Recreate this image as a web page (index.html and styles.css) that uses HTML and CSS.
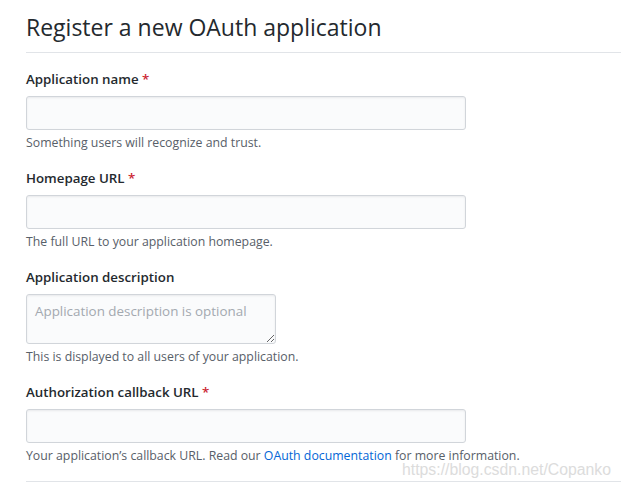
FILE: index.html
```html
<!DOCTYPE html>
<html lang="en">
<head>
    <meta charset="UTF-8">
    <meta name="viewport" content="width=device-width, initial-scale=1.0">
    <title>Register a new OAuth application</title>
    <link rel="stylesheet" href="styles.css">
</head>
<body>
    <div class="page">
        <h2 class="subhead">Register a new OAuth application</h2>

        <form class="app-form">
            <dl class="form-group">
                <dt><label for="app-name">Application name <span class="required">*</span></label></dt>
                <dd>
                    <input type="text" id="app-name" class="form-control">
                    <p class="note">Something users will recognize and trust.</p>
                </dd>
            </dl>

            <dl class="form-group">
                <dt><label for="app-url">Homepage URL <span class="required">*</span></label></dt>
                <dd>
                    <input type="text" id="app-url" class="form-control">
                    <p class="note">The full URL to your application homepage.</p>
                </dd>
            </dl>

            <dl class="form-group">
                <dt><label for="app-desc">Application description</label></dt>
                <dd>
                    <textarea id="app-desc" class="form-control short" placeholder="Application description is optional"></textarea>
                    <p class="note">This is displayed to all users of your application.</p>
                </dd>
            </dl>

            <dl class="form-group">
                <dt><label for="app-callback">Authorization callback URL <span class="required">*</span></label></dt>
                <dd>
                    <input type="text" id="app-callback" class="form-control">
                    <p class="note">Your application’s callback URL. Read our <a href="#">OAuth documentation</a> for more information.</p>
                </dd>
            </dl>

            <hr class="divider">
        </form>

        <div class="watermark">https://blog.csdn.net/Copanko</div>
    </div>
</body>
</html>
```

FILE: styles.css
```css
body {
    margin: 0;
    font-family: "Open Sans", "Noto Sans", sans-serif;
    font-size: 14px;
    line-height: 1.5;
    color: #24292e;
    background: #fff;
    overflow: hidden;
}

.page {
    position: relative;
    padding: 9px 0 0 26px;
    height: 491px;
    box-sizing: border-box;
}

.subhead {
    margin: 0;
    padding-bottom: 7px;
    font-size: 23px;
    font-weight: 400;
    line-height: 36px;
    border-bottom: 1px solid #e1e4e8;
}

.app-form {
    padding-top: 16px;
}

.form-group {
    margin: 0 0 16px;
}

.form-group dt {
    margin: 0 0 6px;
    font-size: 13.3px;
    line-height: 21px;
}

.form-group dd {
    margin: 0;
}

.form-group label {
    font-weight: 600;
}

.required {
    color: #cb2431;
}

.form-control {
    display: block;
    width: 440px;
    height: 34px;
    box-sizing: border-box;
    padding: 6px 8px;
    font-family: inherit;
    font-size: 13.4px;
    color: #24292e;
    background: #fafbfc;
    border: 1px solid #d1d5da;
    border-radius: 3px;
    box-shadow: inset 0 1px 2px rgba(27, 31, 35, 0.075);
    outline: none;
}

.form-control.short {
    width: 250px;
    height: 50px;
    padding: 6px 8px;
    line-height: 20px;
}

.form-control::placeholder {
    color: #a3a9b0;
}

.note {
    margin: 4px 0 2px;
    font-size: 12.3px;
    line-height: 18px;
    color: #586069;
}

.note a {
    color: #0366d6;
    text-decoration: none;
}

.divider {
    margin: 2px 0 0;
    height: 0;
    border: 0;
    border-top: 1px solid #e1e4e8;
}

.watermark {
    position: absolute;
    left: 402px;
    top: 461px;
    font-family: "Liberation Sans", Arial, sans-serif;
    font-size: 15.8px;
    line-height: 18px;
    color: #dcdcdc;
}
```
